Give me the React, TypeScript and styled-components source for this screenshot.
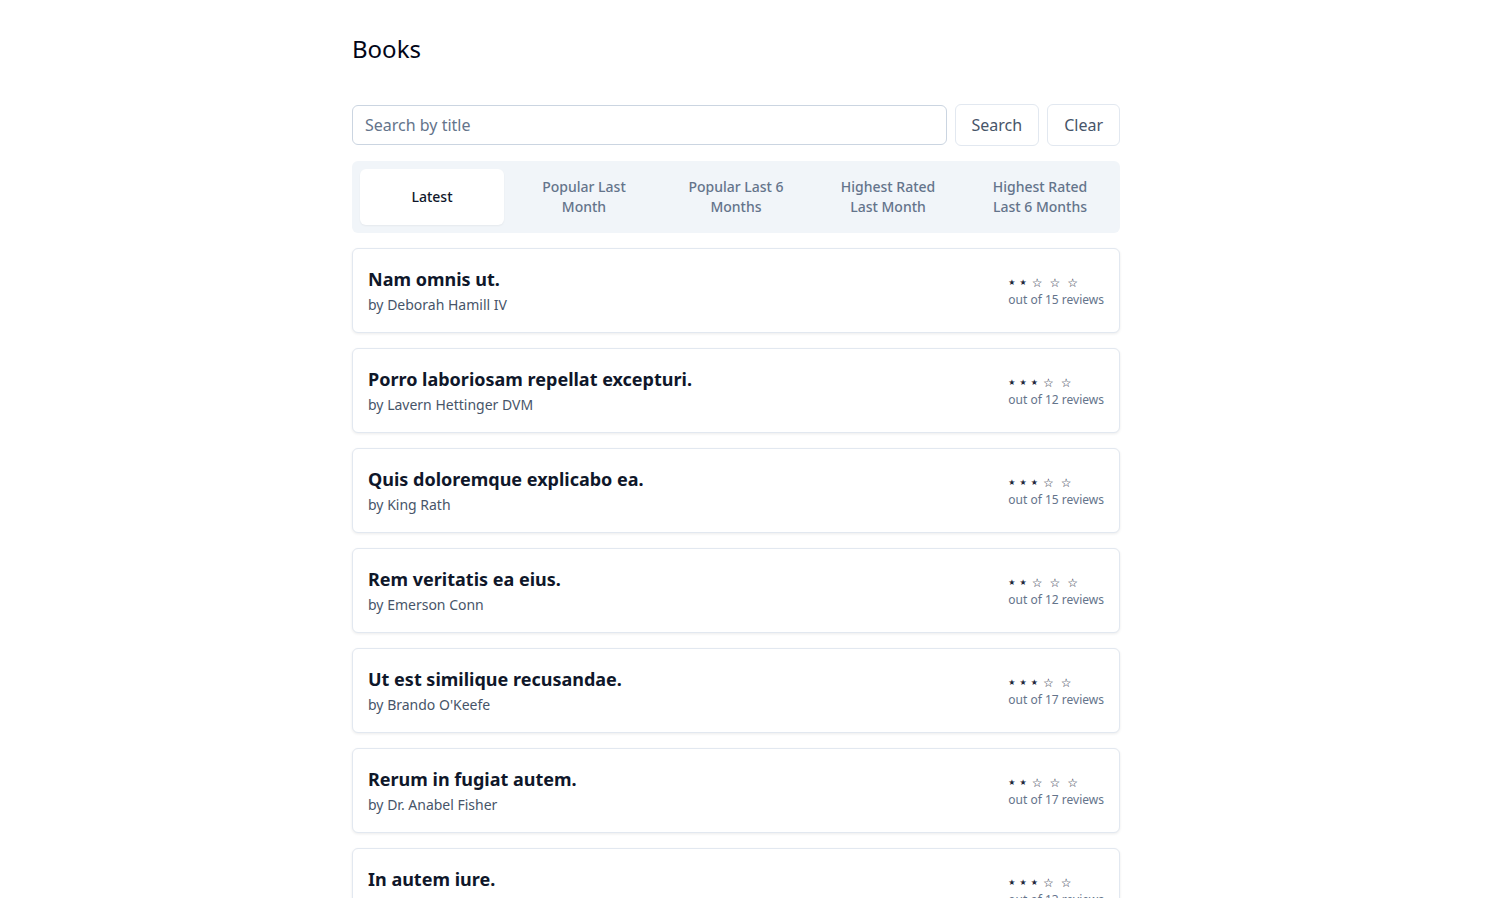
import React from "react";
import styled, { createGlobalStyle } from "styled-components";

const Global = createGlobalStyle`
  * { box-sizing: border-box; }
  body {
    margin: 0;
    padding-right: 29px;
    background: #ffffff;
    font-family: "Noto Sans", "DejaVu Sans", sans-serif;
    color: #0f172a;
  }
`;

const Page = styled.main`
  width: 768px;
  margin: 0 auto;
  padding: 33px 0 0;
`;

const Title = styled.h1`
  margin: 0 0 39px;
  font-size: 24px;
  line-height: 32px;
  font-weight: 400;
  color: #020617;
`;

const SearchRow = styled.form`
  display: flex;
  align-items: center;
  gap: 8px;
`;

const SearchInput = styled.input`
  flex: 1;
  height: 40px;
  border: 1px solid #cbd5e1;
  border-radius: 6px;
  padding: 0 12px;
  font-family: inherit;
  font-size: 16px;
  color: #0f172a;
  outline: none;
  &::placeholder { color: #64748b; }
`;

const Button = styled.button`
  height: 42px;
  padding: 0 16px;
  background: #fff;
  border: 1px solid #e2e8f0;
  border-radius: 6px;
  font-family: inherit;
  font-size: 16px;
  color: #475569;
  cursor: pointer;
`;

const Tabs = styled.div`
  margin-top: 15px;
  display: grid;
  grid-template-columns: repeat(5, 1fr);
  gap: 8px;
  padding: 8px;
  background: #f1f5f9;
  border-radius: 6px;
`;

const Tab = styled.button<{ $active?: boolean }>`
  height: 56px;
  border: none;
  border-radius: 6px;
  padding: 0 16px;
  font-family: inherit;
  font-size: 14px;
  line-height: 20px;
  font-weight: 500;
  text-align: center;
  cursor: pointer;
  background: ${(p) => (p.$active ? "#ffffff" : "transparent")};
  color: ${(p) => (p.$active ? "#0f172a" : "#64748b")};
  box-shadow: ${(p) => (p.$active ? "0 1px 2px rgba(0,0,0,0.05)" : "none")};
`;

const List = styled.ul`
  list-style: none;
  margin: 15px 0 0;
  padding: 0;
  display: flex;
  flex-direction: column;
  gap: 15px;
`;

const Card = styled.li`
  display: flex;
  align-items: center;
  justify-content: space-between;
  padding: 16px 15px 17px;
  border: 1px solid #e2e8f0;
  border-radius: 6px;
  background: #fff;
  box-shadow: 0 1px 3px rgba(0,0,0,0.08);
`;

const BookTitle = styled.div`
  font-size: 18px;
  line-height: 28px;
  font-weight: 700;
  color: #0f172a;
`;

const Author = styled.div`
  margin-top: 2px;
  font-size: 14px;
  line-height: 20px;
  color: #475569;
`;

const Rating = styled.div`
  display: flex;
  flex-direction: column;
  gap: 1px;
  padding-top: 3px;
`;

const Stars = styled.div`
  line-height: 16px;
  height: 16px;
  font-family: "DejaVu Sans", sans-serif;
  display: flex;
  align-items: center;
`;

const Star = styled.span<{ $filled: boolean }>`
  font-size: ${(p) => (p.$filled ? "8px" : "12px")};
  margin-right: ${(p) => (p.$filled ? "4px" : "6px")};
  margin-left: ${(p) => (p.$filled ? "0" : "1px")};
  color: #1e293b;
`;

const Reviews = styled.div`
  font-size: 12px;
  line-height: 16px;
  color: #64748b;
`;

const tabs = [
  "Latest",
  "Popular Last Month",
  "Popular Last 6 Months",
  "Highest Rated Last Month",
  "Highest Rated Last 6 Months",
];

const books = [
  { title: "Nam omnis ut.", author: "Deborah Hamill IV", rating: 2, reviews: 15 },
  { title: "Porro laboriosam repellat excepturi.", author: "Lavern Hettinger DVM", rating: 3, reviews: 12 },
  { title: "Quis doloremque explicabo ea.", author: "King Rath", rating: 3, reviews: 15 },
  { title: "Rem veritatis ea eius.", author: "Emerson Conn", rating: 2, reviews: 12 },
  { title: "Ut est similique recusandae.", author: "Brando O'Keefe", rating: 3, reviews: 17 },
  { title: "Rerum in fugiat autem.", author: "Dr. Anabel Fisher", rating: 2, reviews: 17 },
  { title: "In autem iure.", author: "Mr. Clark Gibson", rating: 3, reviews: 13 },
];

export default function App() {
  return (
    <>
      <Global />
      <Page>
        <Title>Books</Title>
        <SearchRow onSubmit={(e) => e.preventDefault()}>
          <SearchInput placeholder="Search by title" />
          <Button type="submit">Search</Button>
          <Button type="button">Clear</Button>
        </SearchRow>
        <Tabs>
          {tabs.map((t, i) => (
            <Tab key={t} $active={i === 0}>
              {t}
            </Tab>
          ))}
        </Tabs>
        <List>
          {books.map((b) => (
            <Card key={b.title}>
              <div>
                <BookTitle>{b.title}</BookTitle>
                <Author>by {b.author}</Author>
              </div>
              <Rating>
                <Stars>
                  {[0, 1, 2, 3, 4].map((i) => (
                    <Star key={i} $filled={i < b.rating}>
                      {i < b.rating ? "★" : "☆"}
                    </Star>
                  ))}
                </Stars>
                <Reviews>out of {b.reviews} reviews</Reviews>
              </Rating>
            </Card>
          ))}
        </List>
      </Page>
    </>
  );
}
